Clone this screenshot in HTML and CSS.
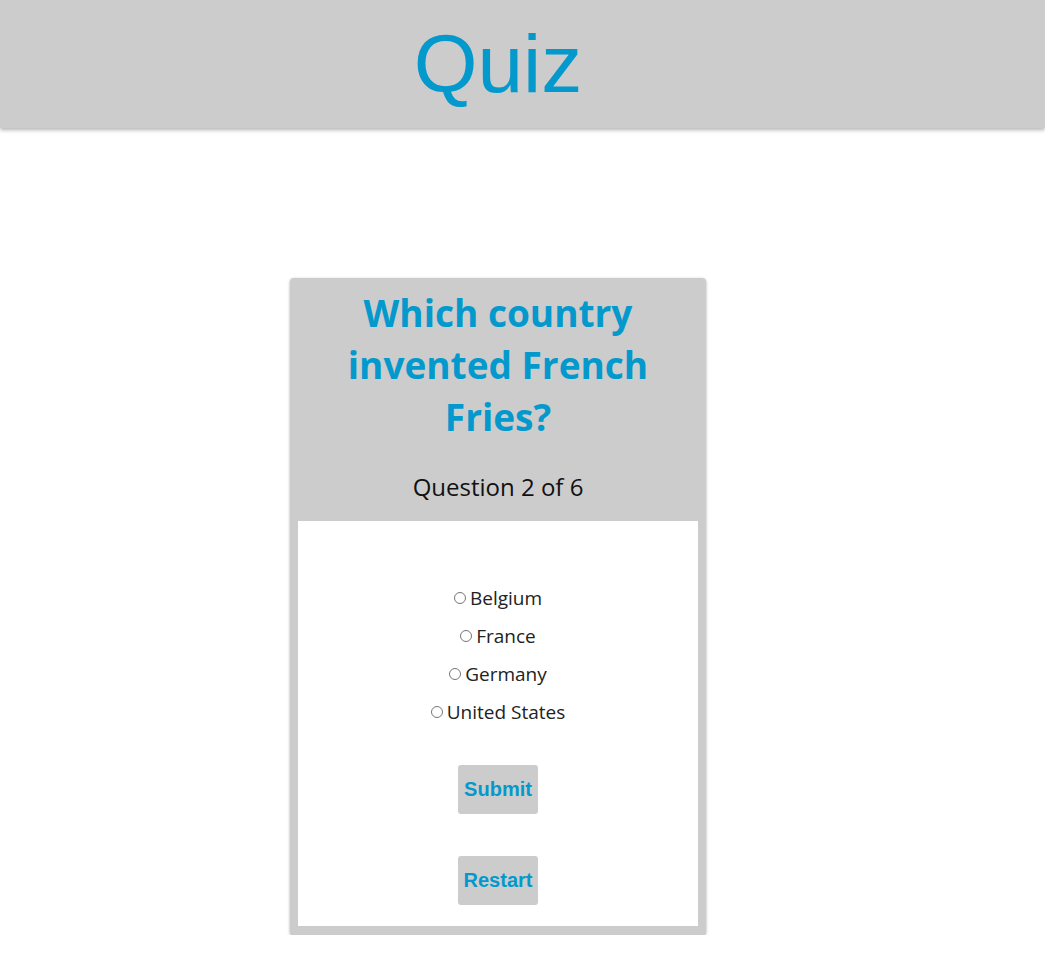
FILE: index.html
```html
<!DOCTYPE html>
<html>
<head>
<meta charset="utf-8">
<link rel="stylesheet" href="styles.css">
</head>
<body>
<header class="top">
  <div class="wrap"><h1 class="title">Quiz</h1></div>
</header>
<main class="wrap main">
  <section class="card">
    <h2 class="question">Which country invented French Fries?</h2>
    <p class="progress">Question 2 of 6</p>
    <div class="body">
      <form class="options">
        <label class="opt"><input type="radio" name="a">Belgium</label>
        <label class="opt"><input type="radio" name="a">France</label>
        <label class="opt"><input type="radio" name="a">Germany</label>
        <label class="opt"><input type="radio" name="a">United States</label>
      </form>
      <button class="btn submit" type="button">Submit</button>
      <button class="btn restart" type="button">Restart</button>
    </div>
  </section>
</main>
</body>
</html>
```
FILE: styles.css
```css
html, body { margin: 0; padding: 0; background: #fff; }
body { font-family: "Open Sans", "Noto Sans", sans-serif; }
.wrap { width: 996px; }
.top {
  height: 128px;
  background: #cccccc;
  box-shadow: 0 2px 4px rgba(0,0,0,0.3);
}
.title {
  margin: 0;
  text-align: center;
  font-family: "Liberation Sans", Arial, sans-serif;
  font-weight: normal;
  font-size: 82px;
  line-height: 128px;
  color: #0399cc;
}
.main {
  display: flex;
  justify-content: center;
  padding-top: 150px;
}
.card {
  width: 400px;
  background: #cccccc;
  border-radius: 4px;
  padding: 9px 8px 9px;
  box-shadow: 0 1px 3px rgba(0,0,0,0.35);
}
.question {
  margin: 0;
  padding: 0 30px;
  text-align: center;
  font-size: 37px;
  line-height: 52px;
  font-weight: 700;
  color: #0399cc;
}
.progress {
  margin: 28px 0 0;
  text-align: center;
  font-size: 24px;
  line-height: 32px;
  color: #111;
}
.body {
  margin-top: 18px;
  background: #fff;
  padding: 58px 0 21px;
  display: flex;
  flex-direction: column;
  align-items: center;
}
.options {
  display: flex;
  flex-direction: column;
  align-items: center;
  margin: 0;
}
.opt {
  display: flex;
  align-items: center;
  height: 38px;
  font-size: 19px;
  color: #222;
}
.opt input {
  width: 12px;
  height: 12px;
  margin: 0 4px 0 0;
}
.btn {
  width: 80px;
  height: 49px;
  border: none;
  border-radius: 3px;
  background: #cccccc;
  color: #0399cc;
  font-family: "Liberation Sans", Arial, sans-serif;
  font-weight: bold;
  font-size: 20px;
  padding: 0;
}
.submit { margin-top: 34px; }
.restart { margin-top: 42px; }
```
